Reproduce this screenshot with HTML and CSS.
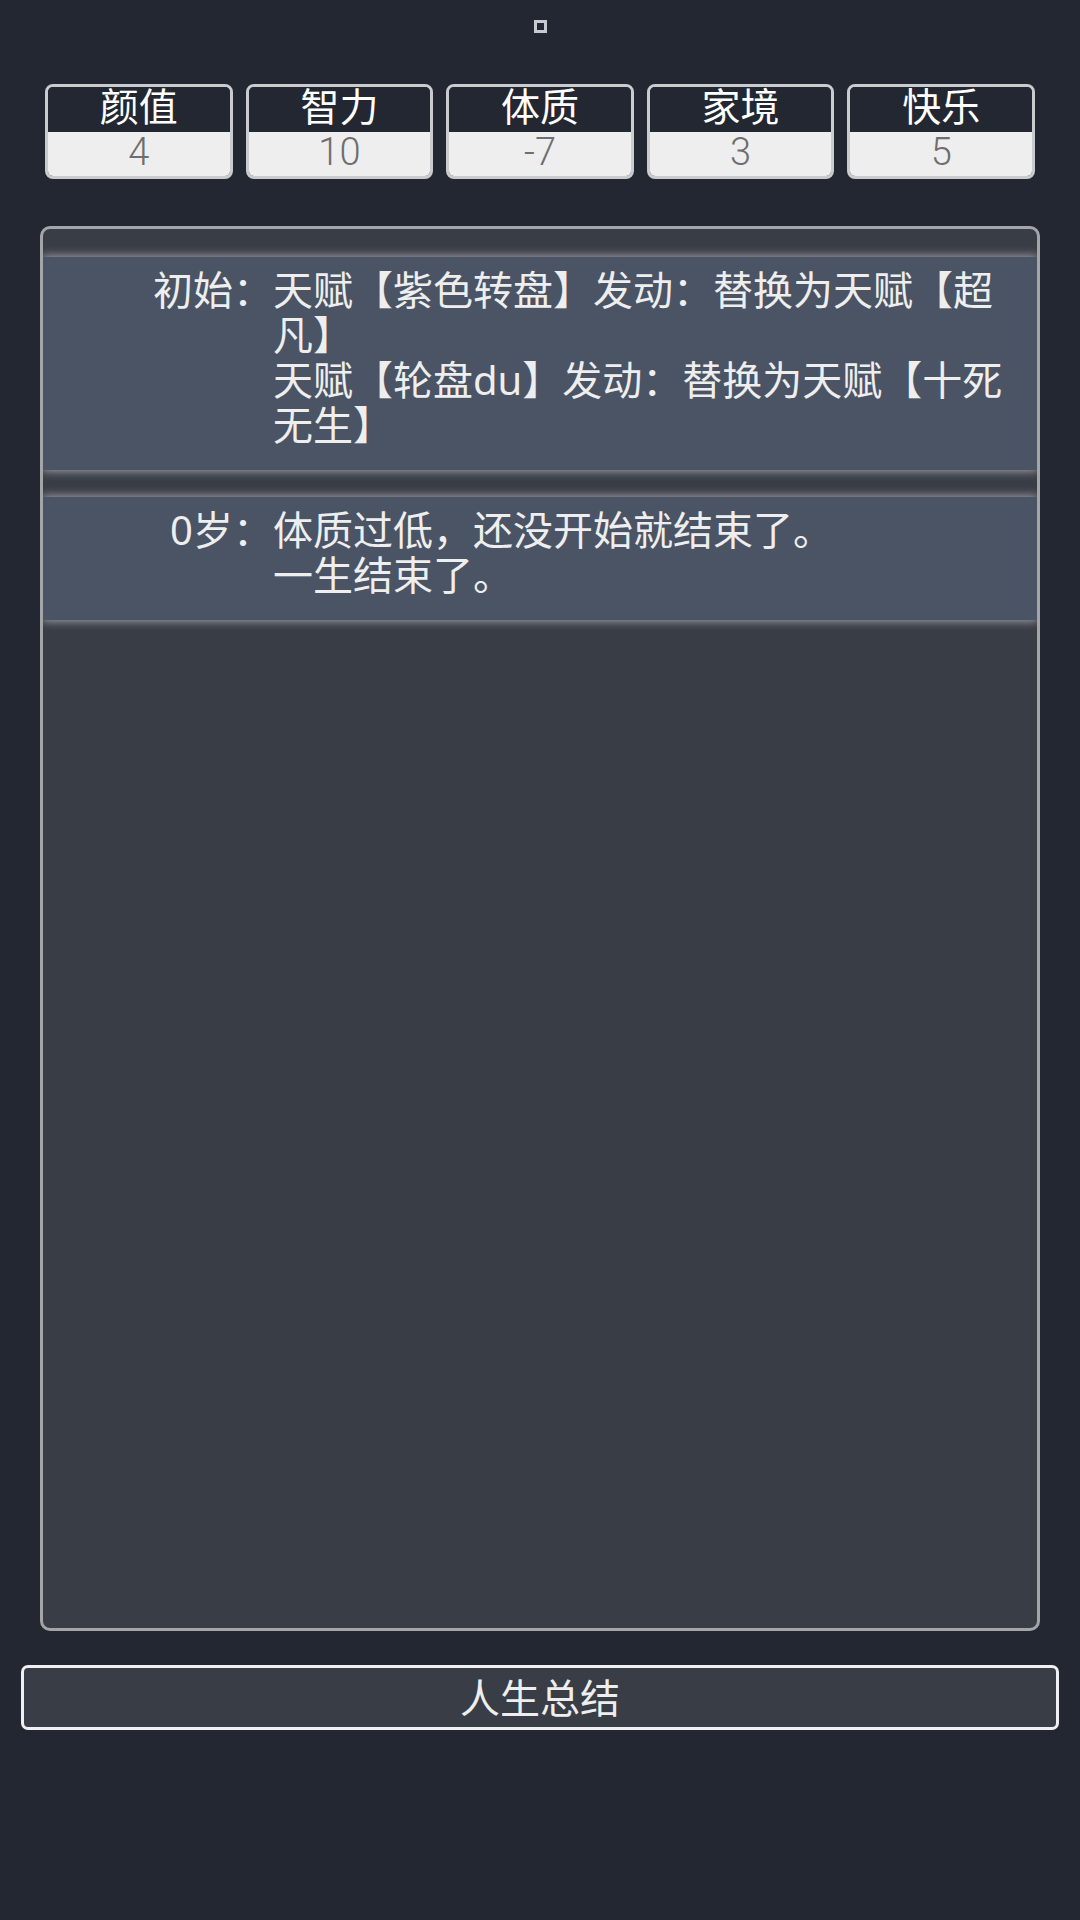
FILE: index.html
```html
<!DOCTYPE html>
<html lang="zh-CN">
<head>
	<meta charset="UTF-8" />
	<title>人生重开模拟器</title>
	<link rel="stylesheet" href="styles.css">
</head>
<body>
	<div class="page">
		<!-- 顶部小方块 -->
		<div class="dot"></div>
		<!-- 属性 -->
		<ul class="props">
			<li><div class="prop-name">颜值</div><div class="prop-val">4</div></li>
			<li><div class="prop-name">智力</div><div class="prop-val">10</div></li>
			<li><div class="prop-name">体质</div><div class="prop-val">-7</div></li>
			<li><div class="prop-name">家境</div><div class="prop-val">3</div></li>
			<li><div class="prop-name">快乐</div><div class="prop-val">5</div></li>
		</ul>
		<!-- 人生轨迹 -->
		<ul class="trajectory">
			<li>
				<span class="age">初始：</span>
				<span class="events">天赋【紫色转盘】发动：替换为天赋【超凡】<br />天赋【轮盘du】发动：替换为天赋【十死无生】</span>
			</li>
			<li>
				<span class="age">0岁：</span>
				<span class="events">体质过低，还没开始就结束了。<br />一生结束了。</span>
			</li>
		</ul>
		<!-- 按钮 -->
		<button class="summary">人生总结</button>
	</div>
</body>
</html>
```

FILE: styles.css
```css
html,
body,
div,
ul,
li {
	margin: 0;
	padding: 0;
	box-sizing: border-box;
}

html,
body {
	width: 100%;
	height: 100%;
	background-color: #222731;
	font-family: "Noto Sans", "Noto Sans CJK SC", sans-serif;
	color: #eee;
}

ul {
	list-style: none;
}

.page {
	display: flex;
	flex-direction: column;
	padding-top: 20px;
}

.dot {
	width: 13px;
	height: 13px;
	margin: 0 auto;
	border: 3px solid #c8cad0;
	background-color: #222731;
}

.props {
	display: grid;
	grid-template-columns: repeat(5, 1fr);
	gap: 13px;
	margin: 51px 45px 0;
}

.props li {
	border: 3px solid #c9cbcf;
	border-radius: 8px;
	text-align: center;
}

.prop-name {
	height: 45px;
	padding-bottom: 7px;
	line-height: 38px;
	border-radius: 5px 5px 0 0;
	background-color: #222731;
	color: #fff;
	font-size: 39px;
}

.prop-val {
	height: 44px;
	padding-bottom: 4px;
	line-height: 40px;
	border-radius: 0 0 5px 5px;
	background-color: #eee;
	color: #6e6e6e;
	font-family: Roboto, "Noto Sans", sans-serif;
	font-size: 38px;
	font-weight: 300;
}

/*人生轨迹面板*/
.trajectory {
	height: 1405px;
	margin: 47px 40px 0;
	padding-top: 28px;
	border: 3px solid #a3a5a9;
	border-radius: 10px;
	background-color: #393d46;
	overflow: hidden;
	display: flex;
	flex-direction: column;
	gap: 27px;
}

.trajectory li {
	display: flex;
	padding: 10px 22px 23px 0;
	background-color: #4a5465;
	box-shadow: 0 0 9px 1px rgba(200, 200, 205, .75);
	font-size: 40px;
	line-height: 45px;
}

.age {
	flex: 0 0 230px;
	text-align: right;
	white-space: nowrap;
}

.events {
	flex: 1;
}

.summary {
	height: 65px;
	margin: 34px 21px 0;
	border: 3px solid #eef0f4;
	border-radius: 7px;
	background-color: #393d46;
	color: #eee;
	font-family: "Noto Sans", "Noto Sans CJK SC", sans-serif;
	font-size: 40px;
	line-height: 52px;
	padding: 0;
}
```
